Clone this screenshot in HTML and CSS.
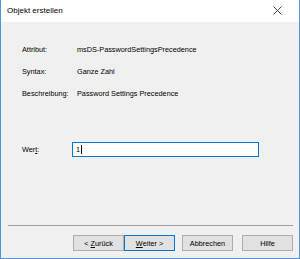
FILE: index.html
```html
<!DOCTYPE html>
<html>
<head>
<meta charset="utf-8">
<link rel="stylesheet" href="styles.css">
</head>
<body>
<div class="window">
  <div class="titlebar">
    <span class="title">Objekt erstellen</span>
    <svg class="close" width="9" height="9" viewBox="0 0 9 9"><path d="M0.5 0.5 L8.5 8.5 M8.5 0.5 L0.5 8.5" stroke="#444" stroke-width="1" fill="none"/></svg>
  </div>
  <div class="content">
    <div class="info">
      <div class="lbl">Attribut:</div><div class="val">msDS-PasswordSettingsPrecedence</div>
      <div class="lbl">Syntax:</div><div class="val">Ganze Zahl</div>
      <div class="lbl">Beschreibung:</div><div class="val">Password Settings Precedence</div>
    </div>
    <div class="wert-row">
      <label class="wert-lbl">Wer<u>t</u>:</label>
      <div class="input">1<span class="caret"></span></div>
    </div>
  </div>
  <div class="sep"></div>
  <div class="buttons">
    <div class="btn">&lt;&nbsp;<u>Z</u>urück</div>
    <div class="btn default"><u>W</u>eiter&nbsp;&gt;</div>
    <div class="btn gap1">Abbrechen</div>
    <div class="btn gap2">Hilfe</div>
  </div>
</div>
</body>
</html>
```

FILE: styles.css
```css
html, body {
  margin: 0;
  padding: 0;
  background: #f0f0f0;
}
.window {
  width: 300px;
  height: 259px;
  box-sizing: border-box;
  border: 1px solid #4f95d9;
  border-top: none;
  background: #f0f0f0;
  font-family: "Liberation Sans", Arial, sans-serif;
  font-size: 7.3px;
  color: #000;
  display: flex;
  flex-direction: column;
}
.titlebar {
  height: 21px;
  background: #fff;
  display: flex;
  align-items: center;
  justify-content: space-between;
  padding: 0 17px 1px 6px;
}
.title {
  font-size: 8px;
  color: #000;
}
.close {
  display: block;
}
.content {
  flex: 1;
  padding: 16px 0 0 21px;
}
.info {
  display: grid;
  grid-template-columns: 55px auto;
  grid-auto-rows: 22px;
  align-items: center;
}
.wert-row {
  display: flex;
  align-items: center;
  margin-top: 38px;
}
.wert-lbl {
  width: 50px;
}
.input {
  width: 187px;
  height: 15px;
  box-sizing: border-box;
  border: 1px solid #0078d7;
  background: #fff;
  padding-left: 3px;
  display: flex;
  align-items: center;
}
.caret {
  display: inline-block;
  width: 1px;
  height: 9px;
  background: #000;
  margin-left: 1px;
}
.sep {
  height: 1px;
  background: #a0a0a0;
  margin: 0 6px 0 7px;
}
.buttons {
  display: flex;
  justify-content: flex-end;
  padding: 9px 6px 7px 0;
}
.btn {
  width: 51px;
  height: 16px;
  box-sizing: border-box;
  border: 1px solid #adadad;
  background: #e1e1e1;
  display: flex;
  align-items: center;
  justify-content: center;
}
.btn.default {
  border-color: #0078d7;
}
.btn.gap1 {
  margin-left: 7px;
}
.btn.gap2 {
  margin-left: 9px;
}
u {
  text-decoration: underline;
  text-underline-offset: 1px;
}
```
